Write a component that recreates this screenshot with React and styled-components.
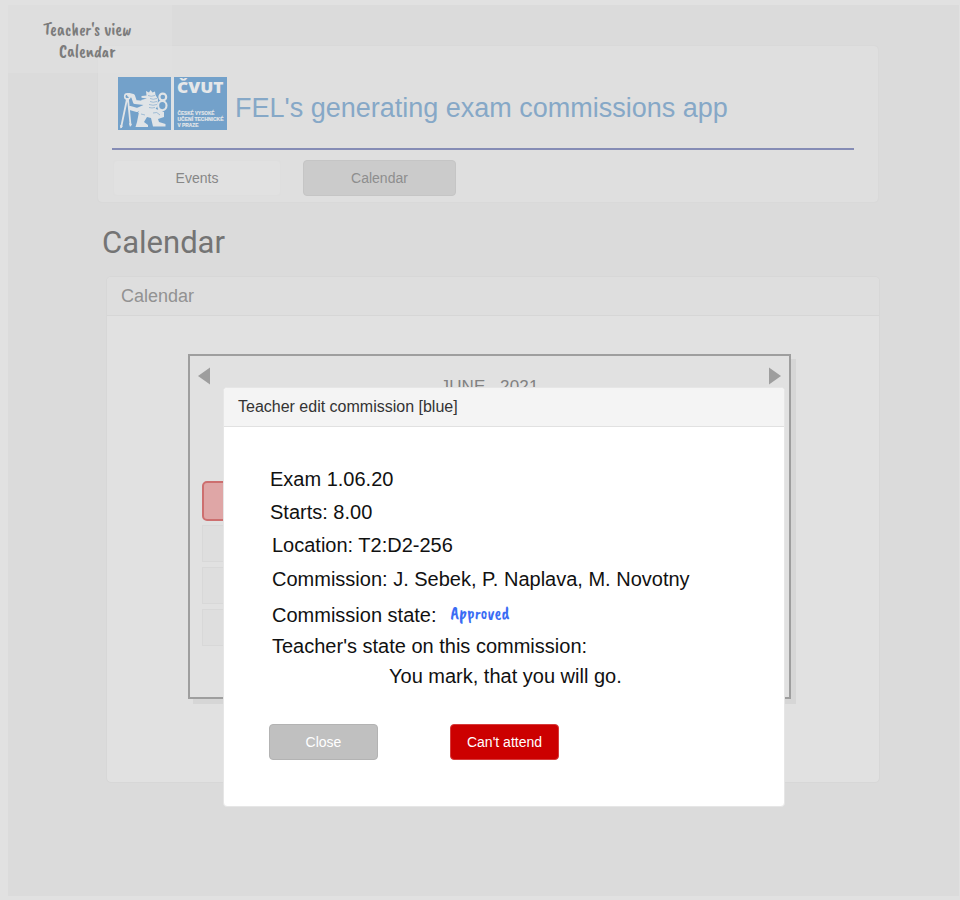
import React from "react";
import styled, { createGlobalStyle } from "styled-components";

const Global = createGlobalStyle`
  * { box-sizing: border-box; }
  body { margin: 0; background: #e1e1e1; font-family: "Liberation Sans", Arial, sans-serif; }
`;

const Page = styled.div`
  position: relative;
  width: 960px;
  height: 900px;
  padding: 5px 1px 4px 8px;
  background: #e1e1e1;
  overflow: hidden;
`;

const Canvas = styled.main`
  height: 891px;
  padding: 40px 80px 0 89px;
  background: #dbdbdb;
`;

const HeaderCard = styled.header`
  width: 782px;
  height: 158px;
  padding: 31px 24px 0 14px;
  border: 1px solid #d9d9d9;
  border-radius: 5px;
  background: #dfdfdf;
`;

const Brand = styled.div`
  display: flex;
  height: 54px;
  padding-left: 6px;
  gap: 7px;
`;

const Logo = styled.svg`
  display: block;
  flex: none;
`;

const AppTitle = styled.div`
  padding-top: 16px;
  font-size: 27px;
  line-height: 31px;
  color: #86a8c7;
  white-space: nowrap;
`;

const Rule = styled.div`
  width: 742px;
  height: 2px;
  margin-top: 17px;
  background: #858cb5;
`;

const Tabs = styled.nav`
  display: flex;
  gap: 22px;
  margin: 10px 0 0 1px;
`;

const Tab = styled.button`
  width: ${(p) => (p.$active ? 153 : 168)}px;
  height: 36px;
  padding: 0;
  border: ${(p) => (p.$active ? "1px solid #c5c5c5" : "1px solid #dedede")};
  border-radius: 4px;
  background: ${(p) => (p.$active ? "#cbcbcb" : "#e1e1e1")};
  color: ${(p) => (p.$active ? "#8e8e8e" : "#878787")};
  font: 14px "Liberation Sans", Arial, sans-serif;
`;

const Heading = styled.h1`
  margin: 21px 0 0 5px;
  font: 400 31px/38px Roboto, sans-serif;
  color: #747474;
`;

const Panel = styled.section`
  width: 774px;
  height: 507px;
  margin: 14px 0 0 9px;
  border: 1px solid #d7d7d7;
  border-radius: 5px;
  background: #e1e1e1;
`;

const PanelTitle = styled.h2`
  height: 39px;
  margin: 0;
  padding-left: 14px;
  border-bottom: 1px solid #d6d6d6;
  border-radius: 4px 4px 0 0;
  background: #dedede;
  font-size: 18px;
  font-weight: 400;
  line-height: 39px;
  color: #929292;
`;

const Month = styled.div`
  width: 603px;
  height: 345px;
  margin: 38px 0 0 81px;
  border: 2px solid #9e9e9e;
  box-shadow: 5px 5px 0 #d6d6d6;
  background: #e1e1e1;
`;

const MonthBar = styled.div`
  display: flex;
  justify-content: space-between;
  height: 125px;
  padding: 11px 8px 0 8px;
`;

const MonthName = styled.div`
  padding-top: 10px;
  font-size: 17px;
  line-height: 20px;
  letter-spacing: 0.15px;
  color: #818181;
  white-space: pre;
`;

const Weeks = styled.div`
  display: flex;
  flex-direction: column;
  margin-left: 12px;
`;

const Day = styled.div`
  width: 40px;
  height: ${(p) => (p.$busy ? 40 : 37)}px;
  margin-bottom: ${(p) => (p.$busy ? 4 : 5)}px;
  border: ${(p) => (p.$busy ? "2px solid #cd6f6f" : "1px solid #d8d8d8")};
  border-radius: ${(p) => (p.$busy ? 5 : 0)}px;
  background: ${(p) => (p.$busy ? "#dfa6a6" : "#dedede")};
`;

const Note = styled.div`
  position: absolute;
  top: 5px;
  left: 8px;
  width: 164px;
  height: 68px;
  padding: 13px 0 0 35px;
  background: rgba(225, 225, 225, 0.5);
`;

const Script = styled.span`
  display: block;
  width: max-content;
  margin-left: ${(p) => p.$indent || 0}px;
  font-family: "Caveat Brush", "Open Sans", sans-serif;
  font-size: 18px;
  font-weight: 400;
  line-height: 22px;
  color: ${(p) => p.$color || "#7c7c7c"};
`;

const Dialog = styled.section`
  position: absolute;
  top: 387px;
  left: 223px;
  width: 562px;
  height: 420px;
  border: 1px solid #e6e6e6;
  border-radius: 4px;
  background: #fff;
`;

const DialogTitle = styled.div`
  height: 39px;
  padding-left: 14px;
  border-bottom: 1px solid #e1e1e1;
  border-radius: 3px 3px 0 0;
  background: #f4f4f4;
  font-size: 16px;
  line-height: 38px;
  color: #333;
`;

const Details = styled.div`
  display: flex;
  flex-direction: column;
  padding: 36px 0 0 46px;
`;

const Line = styled.div`
  display: flex;
  height: ${(p) => p.$height}px;
  margin-left: ${(p) => p.$indent || 0}px;
  font-size: 20px;
  line-height: 32px;
  color: #111;
  white-space: nowrap;
`;

const State = styled.div`
  padding: 3px 0 0 14px;
`;

const Actions = styled.div`
  display: flex;
  gap: 72px;
  margin: 32px 0 0 45px;
`;

const Action = styled.button`
  width: 109px;
  height: 36px;
  padding: 0;
  border: 1px solid ${(p) => (p.$danger ? "#d63b3b" : "#b3b3b3")};
  border-radius: 4px;
  background: ${(p) => (p.$danger ? "#cc0000" : "#c0c0c0")};
  color: #fff;
  font: 14px "Liberation Sans", Arial, sans-serif;
`;

function UniversityLogo() {
  return (
    <Logo width="110" height="54" viewBox="0 0 110 54">
      <path d="M0 0H53V53H0ZM56 0H109V53H56Z" fill="#73a1ca" />
      <path d="M53 0H56V53H53Z" fill="#dce1e5" />
      <g fill="none" stroke="#e0e4e7" strokeLinecap="round" strokeLinejoin="round">
        <path d="M9 22 3.2 50M10 22 12.5 48" strokeWidth="1.8" />
        <circle cx="9.3" cy="19.5" r="2.6" strokeWidth="1.6" />
        <path d="M11 18 15 19 17 25 26 26" strokeWidth="4" />
        <path d="M12 31 19 33 28 29" strokeWidth="4" />
        <circle cx="44.8" cy="20" r="3.4" strokeWidth="2.1" />
        <ellipse cx="44.3" cy="28.6" rx="4.2" ry="4.6" strokeWidth="2.1" />
        <path d="M41 33 44 36" strokeWidth="2.4" />
      </g>
      <g fill="#e0e4e7">
        <path d="M23.5 19 28.5 18.5 28 14 31 15.5 32.5 13 34.5 15.5 37 14.5 37.5 18 40 22 39.5 29 37 33 31 33 28 37 20 36 23 31 26 28 23 23 29 21.5 23.5 20.8Z" />
        <path d="M27 31 38 32 46 35 46 40 40 42 41 45 47.5 47V49.5H35L33 41 29 40 26 45 30 48V50H17.5L19 45 21 35Z" />
        <path d="M2 48 5 49 2.5 51.5ZM11 46 14 47 12 50Z" />
      </g>
      <g fill="none" stroke="#73a1ca" strokeWidth="0.6">
        <path d="M30 18.5q3 1.5 7 0M32 21.5q3 1.5 7 0M32 24.5q3 1.5 7 0M31 27.5q4 1.5 8 0M31 30.5q3 1 6 0M35 36q4-2 7 2M27 38l-4-1" />
      </g>
      <g fill="#e5e7e9" fontWeight="800">
        <text x="59" y="16" fontFamily="Open Sans, sans-serif" fontSize="15.5" textLength="46.5" lengthAdjust="spacingAndGlyphs">ČVUT</text>
        <g fontFamily="Liberation Sans, sans-serif" fontSize="4.9" stroke="#e5e7e9" strokeWidth="0.15">
          <text x="59.5" y="38.2" textLength="37" lengthAdjust="spacingAndGlyphs">ČESKÉ VYSOKÉ</text>
          <text x="59.5" y="43.9" textLength="46" lengthAdjust="spacingAndGlyphs">UČENÍ TECHNICKÉ</text>
          <text x="59.5" y="49.6" textLength="21" lengthAdjust="spacingAndGlyphs">V PRAZE</text>
        </g>
      </g>
    </Logo>
  );
}

function Arrow({ next }) {
  return (
    <svg width="12" height="18" viewBox="0 0 12 18">
      <path d={next ? "M0 0.5 12 9 0 17.5Z" : "M12 0.5 0 9 12 17.5Z"} fill="#9e9e9e" />
    </svg>
  );
}

export default function App() {
  return (
    <Page>
      <Global />
      <Canvas>
        <HeaderCard>
          <Brand>
            <UniversityLogo />
            <AppTitle>FEL's generating exam commissions app</AppTitle>
          </Brand>
          <Rule />
          <Tabs>
            <Tab>Events</Tab>
            <Tab $active>Calendar</Tab>
          </Tabs>
        </HeaderCard>
        <Heading>Calendar</Heading>
        <Panel>
          <PanelTitle>Calendar</PanelTitle>
          <Month>
            <MonthBar>
              <Arrow />
              <MonthName>{"JUNE   2021"}</MonthName>
              <Arrow next />
            </MonthBar>
            <Weeks>
              <Day $busy />
              <Day />
              <Day />
              <Day />
            </Weeks>
          </Month>
        </Panel>
      </Canvas>
      <Note>
        <Script>Teacher's view</Script>
        <Script $indent={16}>Calendar</Script>
      </Note>
      <Dialog role="dialog">
        <DialogTitle>Teacher edit commission [blue]</DialogTitle>
        <Details>
          <Line $height={33}>Exam 1.06.20</Line>
          <Line $height={33}>Starts: 8.00</Line>
          <Line $height={34} $indent={2}>Location: T2:D2-256</Line>
          <Line $height={36} $indent={2}>Commission: J. Sebek, P. Naplava, M. Novotny</Line>
          <Line $height={31} $indent={2}>
            Commission state:
            <State>
              <Script $color="#3a6cf4">Approved</Script>
            </State>
          </Line>
          <Line $height={30} $indent={2}>Teacher's state on this commission:</Line>
          <Line $height={32} $indent={119}>You mark, that you will go.</Line>
        </Details>
        <Actions>
          <Action>Close</Action>
          <Action $danger>Can't attend</Action>
        </Actions>
      </Dialog>
    </Page>
  );
}
